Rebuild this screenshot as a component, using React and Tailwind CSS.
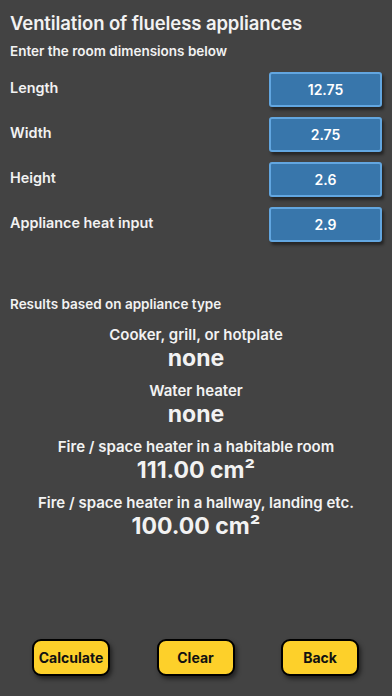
import React from "react";

const inputs = [
  { label: "Length", value: "12.75" },
  { label: "Width", value: "2.75" },
  { label: "Height", value: "2.6" },
  { label: "Appliance heat input", value: "2.9" },
];

const results = [
  { label: "Cooker, grill, or hotplate", value: "none" },
  { label: "Water heater", value: "none" },
  { label: "Fire / space heater in a habitable room", value: "111.00 cm²" },
  { label: "Fire / space heater in a hallway, landing etc.", value: "100.00 cm²" },
];

const YellowButton = ({ children }) => (
  <button className="w-[78px] h-[37px] rounded-[9px] border-2 border-black bg-[#fdd02a] text-[14px] font-bold text-[#111] shadow-[2px_3px_4px_rgba(0,0,0,0.5)]">
    {children}
  </button>
);

export default function App() {
  return (
    <div
      className="w-[392px] h-[696px] bg-[#434343] text-[#f2f2f2] flex flex-col overflow-hidden"
      style={{ fontFamily: "Inter, 'Noto Sans', sans-serif" }}
    >
      <div className="px-[10px] pt-[10px]">
        <h1 className="text-[18.5px] font-semibold leading-[26px] tracking-[-0.1px]">
          Ventilation of flueless appliances
        </h1>
        <p className="mt-[6px] text-[13.5px] font-semibold leading-[18px]">
          Enter the room dimensions below
        </p>
      </div>

      <div className="mt-[12px] flex flex-col gap-[10px] pl-[10px] pr-[10px]">
        {inputs.map((item) => (
          <div key={item.label} className="flex items-center justify-between h-[35px]">
            <span className="text-[14.4px] font-semibold -mt-[4px]">{item.label}</span>
            <div className="w-[113px] h-[35px] rounded-[3px] border-2 border-[#62a6e0] bg-[#3876ab] flex items-center justify-center text-[14px] font-semibold text-white shadow-[2px_3px_3px_rgba(0,0,0,0.45)]">
              {item.value}
            </div>
          </div>
        ))}
      </div>

      <p className="mt-[53px] px-[10px] text-[13.5px] font-semibold leading-[18px]">
        Results based on appliance type
      </p>

      <div className="mt-[12px] flex flex-col items-center">
        {results.map((r) => (
          <div key={r.label} className="flex flex-col items-center mb-[9px]">
            <span className="text-[15px] font-semibold leading-[19px]">{r.label}</span>
            <span className="text-[23px] font-bold leading-[28px]">{r.value}</span>
          </div>
        ))}
      </div>

      <div className="mt-auto mb-[20px] flex justify-between px-[32px] pr-[33px]">
        <YellowButton>Calculate</YellowButton>
        <YellowButton>Clear</YellowButton>
        <YellowButton>Back</YellowButton>
      </div>
    </div>
  );
}
